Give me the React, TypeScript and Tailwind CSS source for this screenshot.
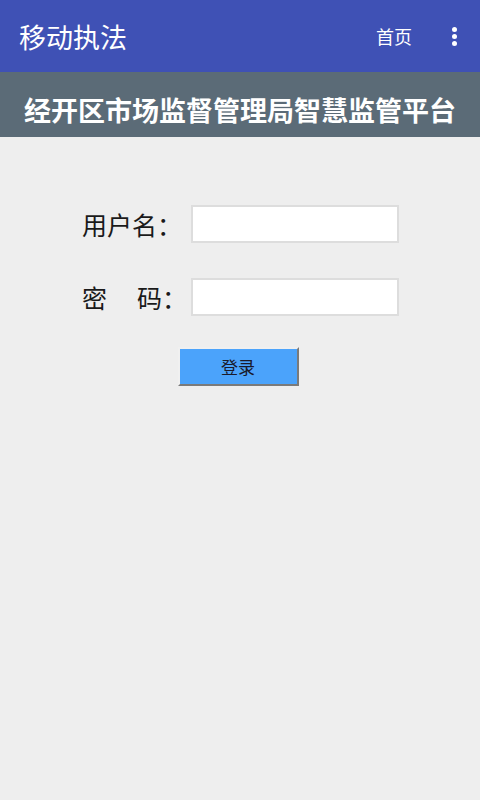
import React from "react";

const font = { fontFamily: '"Noto Sans CJK SC", "Noto Sans", sans-serif' };

export default function App() {
  return (
    <div className="w-[480px] h-[800px] bg-[#eeeeee] flex flex-col" style={font}>
      {/* Toolbar */}
      <div className="h-[72px] bg-[#3f51b5] flex items-center pl-[19px] pr-[23px] text-white">
        <h1 className="text-[27px] leading-none flex-1">移动执法</h1>
        <span className="text-[18px] leading-none mr-[40px]">首页</span>
        <div className="flex flex-col gap-[2px] items-center">
          <span className="w-[5px] h-[5px] rounded-full bg-white" />
          <span className="w-[5px] h-[5px] rounded-full bg-white" />
          <span className="w-[5px] h-[5px] rounded-full bg-white" />
        </div>
      </div>

      {/* Banner */}
      <div className="h-[65px] bg-[#5b6b77] flex items-center justify-center pt-[10px]">
        <h2 className="text-white text-[27px] font-bold leading-none">经开区市场监督管理局智慧监管平台</h2>
      </div>

      {/* Login form */}
      <div className="flex flex-col items-center pt-[68px]">
        <div className="flex items-center gap-[8px] ml-[1px]">
          <label className="w-[101px] text-[25px] leading-none text-[#1a1a1a]">用户名：</label>
          <input className="w-[208px] h-[38px] bg-white border-2 border-[#dddddd] outline-none" />
        </div>
        <div className="flex items-center gap-[8px] ml-[1px] mt-[35px]">
          <label className="w-[101px] text-[25px] leading-none text-[#1a1a1a] flex">
            <span>密</span>
            <span className="ml-[30px]">码：</span>
          </label>
          <input type="password" className="w-[208px] h-[38px] bg-white border-2 border-[#dddddd] outline-none" />
        </div>
        <button className="mt-[31px] ml-[-4px] w-[121px] h-[39px] bg-[#4ba3fb] border-2 border-t-[#f0f0f0] border-l-[#f0f0f0] border-r-[#7a7a7a] border-b-[#7a7a7a] text-[17px] text-[#1a1a2a] leading-none">
          登录
        </button>
      </div>
    </div>
  );
}
